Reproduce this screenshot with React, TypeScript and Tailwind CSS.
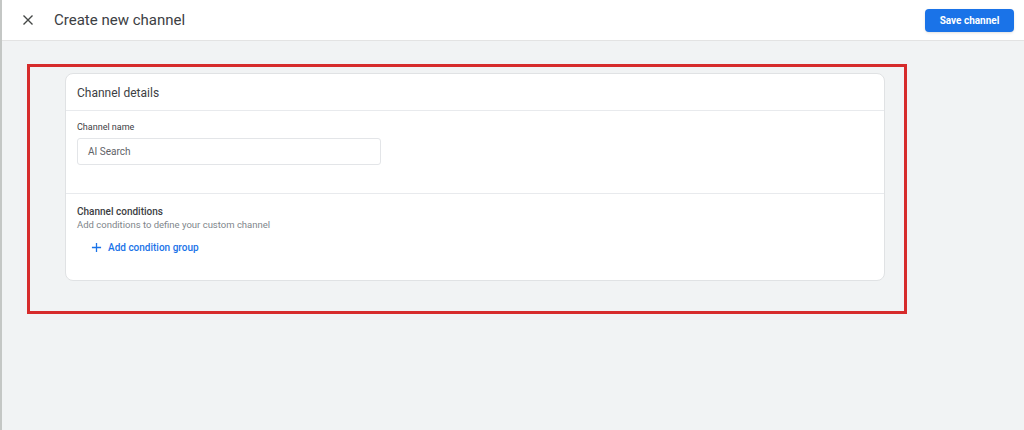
import React from "react";

export default function App() {
  return (
    <div
      className="w-[1024px] h-[430px] bg-[#f1f3f4] border-l-2 border-[#c4c7c5] flex flex-col overflow-hidden"
      style={{ fontFamily: "Roboto, 'Noto Sans', sans-serif" }}
    >
      <header className="h-[41px] shrink-0 bg-white border-b border-[#e3e3e3] flex items-center pl-[17px] pr-[10px]">
        <svg width="18" height="18" viewBox="0 0 24 24" className="text-[#444746]">
          <path d="M6 6 L18 18 M18 6 L6 18" stroke="currentColor" strokeWidth="1.8" fill="none" />
        </svg>
        <div className="ml-[17px] text-[15px] text-[#3c4043] leading-none">Create new channel</div>
        <button className="ml-auto h-[23px] w-[89px] rounded-[4px] bg-[#1a73e8] text-white text-[10px] font-bold shadow-sm">
          Save channel
        </button>
      </header>
      <div className="pl-[25px] pt-[23px]">
        <div className="w-[880px] border-[3px] border-[#d62b2b] pt-[6px] pl-[35px] pb-[30px]">
          <div className="w-[820px] bg-white rounded-[8px] border border-[#e0e2e4]">
            <div className="h-[37px] border-b border-[#e8eaed] flex items-center pl-[11px] pt-[1px] text-[12px] text-[#3c4043]">
              Channel details
            </div>
            <div className="h-[83px] border-b border-[#e8eaed] px-[11px] pt-[11px]">
              <div className="text-[9px] text-[#3c4043] leading-[11px]">Channel name</div>
              <div className="mt-[5px] w-[304px] h-[27px] border border-[#e3e5e8] rounded-[3px] flex items-center pl-[10px] text-[10px] text-[#5f6368]">
                AI Search
              </div>
            </div>
            <div className="h-[86px] px-[11px] pt-[11px]">
              <div className="text-[10px] font-medium text-[#3c4043] leading-[13px]">Channel conditions</div>
              <div className="text-[9.5px] text-[#80868b] leading-[13px]">Add conditions to define your custom channel</div>
              <div className="mt-[9px] ml-[14px] flex items-center text-[#1a73e8]">
                <svg width="11" height="11" viewBox="0 0 12 12">
                  <path d="M6 1 V11 M1 6 H11" stroke="currentColor" strokeWidth="1.4" fill="none" />
                </svg>
                <span className="ml-[6px] text-[10px] font-medium text-[#1a73e8]">Add condition group</span>
              </div>
            </div>
          </div>
        </div>
      </div>
    </div>
  );
}
